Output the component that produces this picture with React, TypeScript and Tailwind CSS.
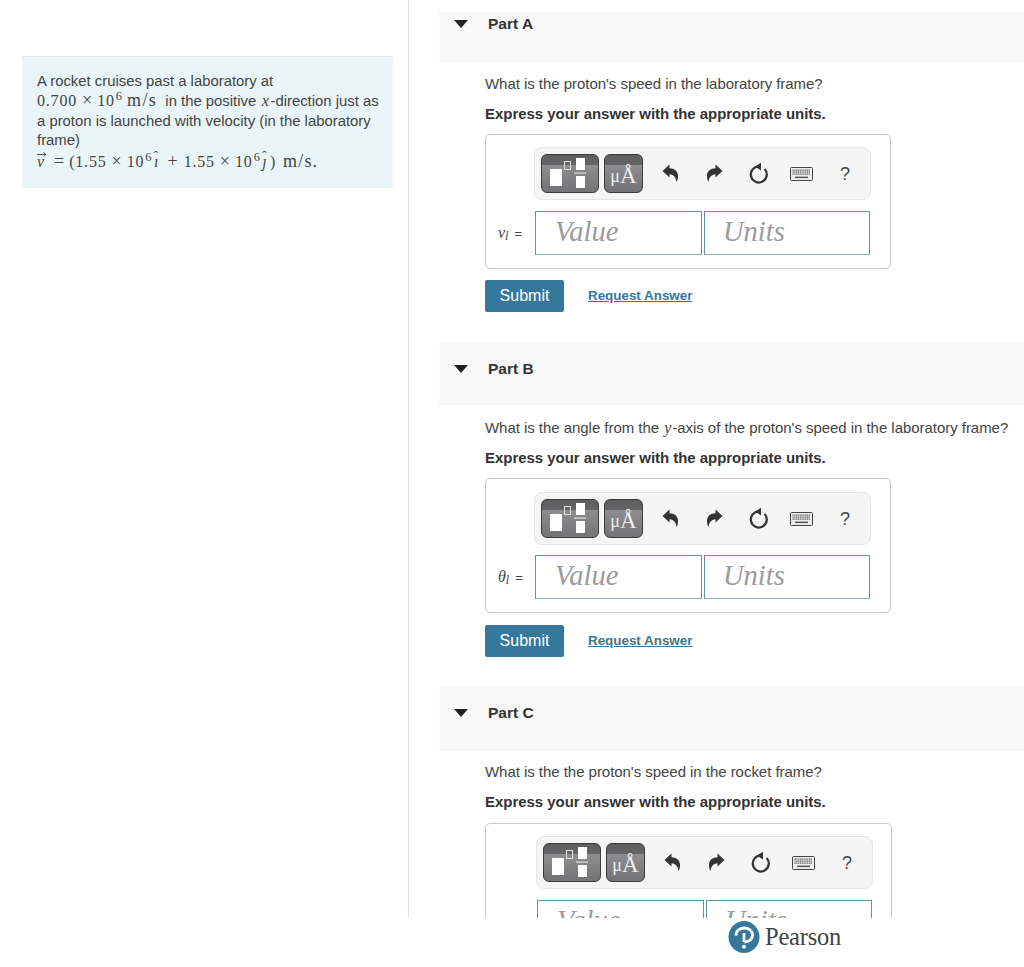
import React from "react";

const serif = "font-['Liberation_Serif',serif]";

function Undo({ flip }: { flip?: boolean }) {
  return (
    <svg width="17" height="19" viewBox="0 0 17 19" className={flip ? "-scale-x-100" : ""}>
      <path d="M0.5 7 L7.5 0.5 L7.5 4.2 C12.5 4.2 16 7 16 12 C16 14.5 15.5 16.5 14.5 18 C14 14 12 10.5 7.5 10.3 L7.5 13.5 Z" fill="#333" />
    </svg>
  );
}

function Redo() {
  return <Undo flip />;
}

function Reset() {
  return (
    <svg width="20" height="23" viewBox="0 0 20 23">
      <path d="M15.6 7 A8 8 0 1 1 10 4.5" fill="none" stroke="#333" strokeWidth="2.2" />
      <path d="M6 4.5 L12 0.8 L12 8.6 Z" fill="#333" />
    </svg>
  );
}

function Keyboard() {
  const keys: React.ReactNode[] = [];
  for (let r = 0; r < 3; r++) {
    for (let c = 0; c < 10; c++) {
      keys.push(<rect key={`${r}-${c}`} x={2.5 + c * 1.8} y={2.5 + r * 2} width="1.2" height="1.2" fill="#555" />);
    }
  }
  return (
    <svg width="23" height="14" viewBox="0 0 23 14">
      <rect x="0.5" y="0.5" width="22" height="13" rx="1" fill="#eee" stroke="#444" />
      {keys}
      <rect x="5" y="9.6" width="13" height="1.5" fill="#555" />
    </svg>
  );
}

function Toolbar({ className }: { className: string }) {
  return (
    <div className={`flex h-[53px] w-[337px] items-center rounded-[8px] border border-[#e6e6e6] bg-[#f5f5f5] pl-[6px] ${className}`}>
      <div className="relative h-[39px] w-[58px] overflow-hidden rounded-[6px] border border-[#3c3c3e] bg-[linear-gradient(#5e5e60_0,#666668_28%,#8e8e91_28%,#737376_100%)]">
        <svg width="56" height="37" viewBox="0 0 56 37" className="absolute left-0 top-0">
          <rect x="8" y="14" width="12" height="17" fill="#fff" />
          <rect x="22.5" y="6.5" width="6" height="8" fill="none" stroke="#ddd" strokeWidth="1" />
          <rect x="34" y="3" width="9" height="12" fill="#fff" />
          <rect x="32" y="17.5" width="12" height="1.2" fill="#ddd" />
          <rect x="34" y="21" width="9" height="12" fill="#fff" />
        </svg>
      </div>
      <div className="relative ml-[5px] flex h-[39px] w-[39px] items-end justify-center overflow-hidden rounded-[6px] border border-[#3c3c3e] bg-[linear-gradient(#5e5e60_0,#666668_28%,#8e8e91_28%,#737376_100%)] pb-[4px]">
        <span className={`${serif} text-[18px] leading-[24px] text-[#eee]`}>μ</span>
        <span className={`${serif} text-[23px] leading-[24px] text-[#eee]`}>Å</span>
      </div>
      <div className="ml-[19px] flex w-[17px] justify-center"><Undo /></div>
      <div className="ml-[27px] flex w-[17px] justify-center"><Redo /></div>
      <div className="ml-[26px] flex w-[20px] justify-center"><Reset /></div>
      <div className="ml-[21px] flex w-[23px] justify-center"><Keyboard /></div>
      <span className="ml-[27px] font-['Liberation_Sans',sans-serif] text-[18px] leading-none text-[#444]">?</span>
    </div>
  );
}

function AnswerBox({
  symbol,
  sub,
  wide,
  toolbarMt,
  rowMt,
}: {
  symbol: string;
  sub: string;
  wide?: boolean;
  toolbarMt: string;
  rowMt: string;
}) {
  return (
    <div className={`rounded-[5px] border border-[#c9c9c9] ${wide ? "w-[407px]" : "w-[406px]"} h-[135px] bg-white`}>
      <Toolbar className={`${wide ? "ml-[50px]" : "ml-[48px]"} ${toolbarMt}`} />
      <div className={`${rowMt} flex items-center`}>
        <div className={`${wide ? "w-[51px]" : "w-[49px]"} whitespace-nowrap pl-[12px] leading-none text-[#444]`}>
          <i className={`${serif} text-[16px]`}>{symbol}</i>
          <i className={`${serif} relative top-[2px] text-[12px]`}>{sub}</i>
          <span className="ml-[6px] font-['Liberation_Sans',sans-serif] text-[13px]">{symbol ? "=" : ""}</span>
        </div>
        <div className={`${serif} flex h-[44px] w-[167px] items-center border border-[#5b93ad] border-b-[#8db6c9] pb-[2px] pl-[19px] text-[28.5px] italic text-[#9b9b9b]`}>Value</div>
        <div className={`${serif} ml-[2px] flex h-[44px] w-[166px] items-center border border-[#5b93ad] border-b-[#8db6c9] pb-[2px] pl-[18px] text-[28.5px] italic text-[#9b9b9b]`}>Units</div>
      </div>
    </div>
  );
}

function Part({
  title,
  headerH,
  headerPt,
  mt,
  question,
  gapQ,
  gapE,
  gapB,
  gapS,
  toolbarMt,
  rowMt,
  symbol,
  sub,
  wide,
}: {
  title: string;
  headerH: string;
  headerPt: string;
  mt: string;
  question: React.ReactNode;
  gapQ: string;
  gapE: string;
  gapB: string;
  gapS: string;
  toolbarMt: string;
  rowMt: string;
  symbol: string;
  sub: string;
  wide?: boolean;
}) {
  return (
    <section className={mt}>
      <div className={`${headerH} ${headerPt} flex items-start bg-[#f8f8f8]`}>
        <svg width="14" height="8" viewBox="0 0 14 8" className="ml-[15px] mt-[5px]">
          <path d="M0 0 H14 L7 8 Z" fill="#222" />
        </svg>
        <span className="ml-[20px] text-[15.5px] font-bold leading-[18px] text-[#333]">{title}</span>
      </div>
      <div className="pl-[46px]">
        <p className={`${gapQ} whitespace-nowrap text-[15px] leading-[20px] tracking-[-0.04px] text-[#444]`}>{question}</p>
        <p className={`${gapE} text-[15px] font-bold leading-[20px] tracking-[-0.04px] text-[#333]`}>Express your answer with the appropriate units.</p>
        <div className={gapB}>
          <AnswerBox symbol={symbol} sub={sub} wide={wide} toolbarMt={toolbarMt} rowMt={rowMt} />
        </div>
        {title !== "Part C" && (
          <div className={`${gapS} flex items-center`}>
            <div className="flex h-[32px] w-[79px] items-center justify-center rounded-[2px] bg-[#36789b] text-[16px] text-white">Submit</div>
            <span className="ml-[24px] text-[13.4px] font-bold text-[#36789b] underline">Request Answer</span>
          </div>
        )}
      </div>
    </section>
  );
}

function Sup({ children }: { children: React.ReactNode }) {
  return <sup className="ml-[1px] text-[12.5px] tracking-normal">{children}</sup>;
}

function Hat({ children }: { children: React.ReactNode }) {
  return (
    <span className="relative inline-block w-[10px] text-center italic">
      {children}
      <span className="absolute left-[2px] top-[-2px] text-[14px] not-italic leading-[14px]">ˆ</span>
    </span>
  );
}

function Times() {
  return <span className="mx-[5px] text-[18px] leading-[0] tracking-normal">×</span>;
}

export default function App() {
  return (
    <div className="h-[967px] w-[1024px] overflow-hidden bg-white font-['Liberation_Sans',sans-serif]">
      <div className="flex h-[918px] overflow-hidden">
        <aside className="w-[409px] shrink-0 border-r border-[#d9dfea] pl-[22px] pt-[56px]">
          <div className="h-[132px] w-[371px] border-t border-[#dbe8ec] bg-[#e9f5f8] pl-[15px] pt-[14px] text-[14.87px] text-[#444]">
            <div className="h-[20px] leading-[20px]">A rocket cruises past a laboratory at</div>
            <div className="h-[20px] whitespace-nowrap leading-[20px]">
              <span className={`${serif} text-[16px] leading-[0] tracking-[0.8px]`}>0.700<Times />10<Sup>6</Sup><span className="ml-[5px] mr-[4px] text-[18px] leading-[0] tracking-[1.4px]">m/s</span></span> in the positive <i className={`${serif} mx-[1.5px] text-[16px] leading-[0]`}>x</i>-direction just as
            </div>
            <div className="h-[19px] leading-[20px]">a proton is launched with velocity (in the laboratory</div>
            <div className="h-[20px] leading-[20px]">frame)</div>
            <div className={`${serif} mt-[1px] flex h-[20px] items-baseline whitespace-nowrap text-[16px] leading-[20px] tracking-[0.8px]`}>
              <span className="relative inline-block w-[9px] italic">
                v
                <svg width="10" height="5" viewBox="0 0 10 5" className="absolute left-[0px] top-[0px]">
                  <path d="M0 2.5 H9 M6.5 0.5 L9 2.5 L6.5 4.5" fill="none" stroke="#444" strokeWidth="0.9" />
                </svg>
              </span>
              <span className="ml-[8px] mr-[5px] text-[18px] tracking-normal">=</span>
              <span>(1.55<Times />10<Sup>6</Sup></span>
              <Hat>ı</Hat>
              <span className="mx-[6px] text-[18px] tracking-normal">+</span>
              <span>1.55<Times />10<Sup>6</Sup></span>
              <Hat>ȷ</Hat>
              <span>)<span className="ml-[7px] text-[18px] tracking-[1.2px]">m/s.</span></span>
            </div>
          </div>
        </aside>
        <main className="min-w-0 flex-1 pl-[30px] pt-[12px]">
          <Part
            title="Part A"
            headerH="h-[50px]"
            headerPt="pt-[3px]"
            mt=""
            question="What is the proton's speed in the laboratory frame?"
            gapQ="mt-[12px]"
            gapE="mt-[10px]"
            gapB="mt-[10px]"
            gapS="mt-[11px]"
            toolbarMt="mt-[12px]"
            rowMt="mt-[11px]"
            symbol="v"
            sub="l"
          />
          <Part
            title="Part B"
            headerH="h-[62px]"
            headerPt="pt-[17px]"
            mt="mt-[31px]"
            question={<>What is the angle from the <i className={`${serif} mx-[1px] text-[16px]`}>y</i>-axis of the proton's speed in the laboratory frame?</>}
            gapQ="mt-[12.5px]"
            gapE="mt-[10.5px]"
            gapB="mt-[10px]"
            gapS="mt-[12px]"
            toolbarMt="mt-[13px]"
            rowMt="mt-[10px]"
            symbol="θ"
            sub="l"
          />
          <Part
            title="Part C"
            headerH="h-[64px]"
            headerPt="pt-[17px]"
            mt="mt-[30px]"
            question="What is the the proton's speed in the rocket frame?"
            gapQ="mt-[11px]"
            gapE="mt-[10px]"
            gapB="mt-[11px]"
            gapS=""
            toolbarMt="mt-[12px]"
            rowMt="mt-[11px]"
            symbol=""
            sub=""
            wide
          />
        </main>
      </div>
      <div className="flex items-center pl-[728px] pt-[3px]">
        <svg width="32" height="32" viewBox="0 0 32 32">
          <ellipse cx="16" cy="16" rx="15.5" ry="16" fill="#36789b" />
          <path d="M8 14.5 C8 9.5 12 7 16.5 7 C21 7 24.5 10 24.5 14 C24.5 18.5 20.5 21 16.5 21" fill="none" stroke="#fff" strokeWidth="2.8" />
          <path d="M16 12 V21" stroke="#fff" strokeWidth="2.8" />
          <circle cx="16" cy="25.8" r="2" fill="#fff" />
        </svg>
        <span className={`${serif} ml-[5px] text-[24.5px] leading-[30px] tracking-[-0.2px] text-[#444]`}>Pearson</span>
      </div>
    </div>
  );
}
